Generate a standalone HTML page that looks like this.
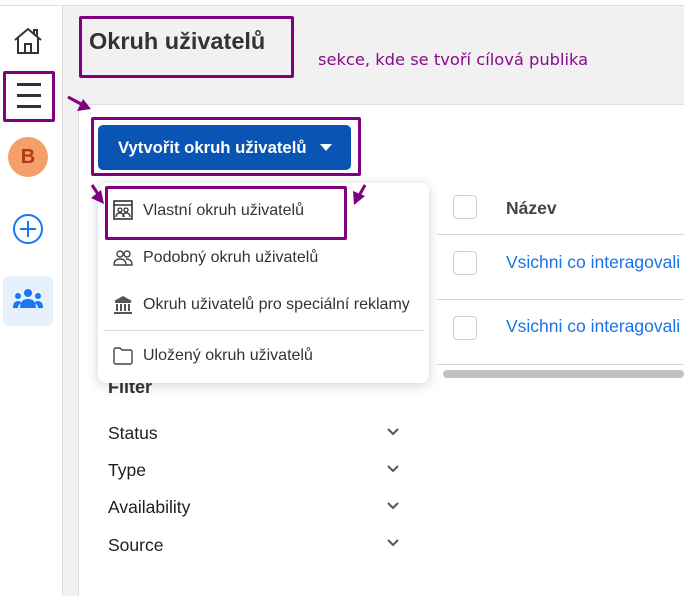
<!DOCTYPE html>
<html><head><meta charset="utf-8"><style>
*{margin:0;padding:0;box-sizing:border-box}
body{width:684px;height:596px;overflow:hidden;background:#fff;font-family:"Liberation Sans",Arial,sans-serif;position:relative;color:#1c1e21}
.a{position:absolute}
.pb{position:absolute;border:3px solid #800080;border-radius:2px}
.mi{position:absolute;left:143px;font-size:16px;color:#333}
.fi{position:absolute;left:108px;font-size:17.5px;color:#1c1e21}
.cb{position:absolute;left:453px;width:24px;height:24px;border:1px solid #ccd0d5;border-radius:4px;background:#fff}
.ln{position:absolute;left:437px;right:0;height:1px;background:#d6d6d6}
.ch{position:absolute;left:386px}
</style></head><body>
<div class="a" style="left:0;top:5px;width:684px;height:1px;background:#ddd"></div>
<div class="a" style="left:62px;top:6px;width:1px;height:590px;background:#ddd"></div>
<div class="a" style="left:63px;top:6px;width:621px;height:590px;background:#f1f1f1"></div>
<div class="a" style="left:78px;top:104px;width:606px;height:492px;background:#fff;border-left:1px solid #ddd;border-top:1px solid #ddd"></div>
<!-- sidebar icons -->
<svg class="a" style="left:13px;top:27px" width="30" height="28" viewBox="0 0 30 28"><path d="M2 13 L15 2 L28 13 M5 11 V26 H25 V11 M12 26 V17 H18 V26 M21 7 V3 H24 V9" fill="none" stroke="#333" stroke-width="2"/></svg>
<div class="pb" style="left:3px;top:71px;width:52px;height:51px"></div>
<div class="a" style="left:17px;top:83px;width:24px;height:2.5px;background:#333"></div>
<div class="a" style="left:17px;top:94px;width:24px;height:2.5px;background:#333"></div>
<div class="a" style="left:17px;top:105px;width:24px;height:2.5px;background:#333"></div>
<div class="a" style="left:8px;top:137px;width:40px;height:40px;border-radius:50%;background:#f79f6a;color:#b03a12;font-weight:bold;font-size:20px;text-align:center;line-height:40px">B</div>
<div class="a" style="left:13px;top:214px;width:30px;height:30px;border:2px solid #1877f2;border-radius:50%"></div>
<div class="a" style="left:20px;top:228px;width:16px;height:2px;background:#1877f2"></div>
<div class="a" style="left:27px;top:221px;width:2px;height:16px;background:#1877f2"></div>
<div class="a" style="left:3px;top:276px;width:50px;height:50px;border-radius:6px;background:#e7f0fd"></div>
<svg class="a" style="left:12px;top:288px" width="32" height="24" viewBox="0 0 32 24"><circle cx="16" cy="5" r="4" fill="#1877f2"/><circle cx="6" cy="8" r="3" fill="#1877f2"/><circle cx="26" cy="8" r="3" fill="#1877f2"/><path d="M8 20 Q8 11 16 11 Q24 11 24 20Z M1 20 Q1 13 6 13 Q9 13 9 15 Q6 17 6 20Z M31 20 Q31 13 26 13 Q23 13 23 15 Q26 17 26 20Z" fill="#1877f2"/></svg>
<!-- header -->
<div class="pb" style="left:79px;top:16px;width:215px;height:62px"></div>
<div class="a" style="left:89px;top:28px;font-size:23.5px;font-weight:bold;color:#333">Okruh uživatelů</div>
<div class="a" style="left:318px;top:50px;color:#8a0a8a;font-family:'DejaVu Sans',sans-serif;font-size:16.3px">sekce, kde se tvoří cílová publika</div>
<!-- button -->
<div class="pb" style="left:91px;top:117px;width:270px;height:59px"></div>
<div class="a" style="left:98px;top:125px;width:253px;height:45px;background:#0a54b4;border-radius:5px;color:#fff;font-weight:bold;font-size:16.7px;line-height:45px;padding-left:20px">Vytvořit okruh uživatelů</div>
<div class="a" style="left:320px;top:144px;border-left:6px solid transparent;border-right:6px solid transparent;border-top:7px solid #fff"></div>
<!-- table -->
<div class="cb" style="top:195px"></div><div class="a" style="left:506px;top:198px;font-size:17.5px;font-weight:bold;color:#444">Název</div>
<div class="ln" style="top:234px"></div>
<div class="cb" style="top:251px"></div><div class="a" style="left:506px;top:252px;font-size:17.5px;color:#1a73e8">Vsichni co interagovali</div>
<div class="ln" style="top:299px"></div>
<div class="cb" style="top:316px"></div><div class="a" style="left:506px;top:316px;font-size:17.5px;color:#1a73e8">Vsichni co interagovali</div>
<div class="ln" style="top:364px"></div>
<div class="a" style="left:443px;top:370px;width:241px;height:8px;border-radius:4px;background:#c1c1c1"></div>
<!-- filter -->
<div class="a" style="left:108px;top:377px;font-size:18px;font-weight:bold;color:#333">Filter</div>
<div class="fi" style="top:423px">Status</div>
<div class="fi" style="top:460px">Type</div>
<div class="fi" style="top:497px">Availability</div>
<div class="fi" style="top:535px">Source</div>
<svg class="ch" style="top:427px" width="14" height="10"><path d="M2 2 L7 7 L12 2" fill="none" stroke="#555" stroke-width="2"/></svg>
<svg class="ch" style="top:464px" width="14" height="10"><path d="M2 2 L7 7 L12 2" fill="none" stroke="#555" stroke-width="2"/></svg>
<svg class="ch" style="top:501px" width="14" height="10"><path d="M2 2 L7 7 L12 2" fill="none" stroke="#555" stroke-width="2"/></svg>
<svg class="ch" style="top:538px" width="14" height="10"><path d="M2 2 L7 7 L12 2" fill="none" stroke="#555" stroke-width="2"/></svg>
<!-- dropdown -->
<div class="a" style="left:98px;top:183px;width:331px;height:200px;background:#fff;border-radius:8px;box-shadow:0 2px 12px rgba(0,0,0,.18)"></div>
<div class="pb" style="left:105px;top:186px;width:242px;height:54px"></div>
<svg class="a" style="left:113px;top:200px" width="20" height="20" viewBox="0 0 20 20"><rect x="1" y="1" width="18" height="18" fill="none" stroke="#333" stroke-width="1.6"/><line x1="1" y1="5" x2="19" y2="5" stroke="#333" stroke-width="1.6"/><circle cx="7" cy="10" r="2" fill="none" stroke="#333" stroke-width="1.3"/><circle cx="13" cy="10" r="2" fill="none" stroke="#333" stroke-width="1.3"/><path d="M3 17 Q3 13 7 13 Q11 13 11 17 M10 17 Q10 13 13 13 Q17 13 17 17" fill="none" stroke="#333" stroke-width="1.3"/></svg>
<div class="mi" style="top:202px">Vlastní okruh uživatelů</div>
<svg class="a" style="left:113px;top:249px" width="20" height="18" viewBox="0 0 20 18"><circle cx="7" cy="5" r="3" fill="none" stroke="#444" stroke-width="1.4"/><circle cx="14" cy="5" r="3" fill="none" stroke="#444" stroke-width="1.4"/><path d="M1 16 Q1 10 7 10 Q13 10 13 16Z M13 10 Q19 10 19 16 H13" fill="none" stroke="#444" stroke-width="1.4"/></svg>
<div class="mi" style="top:249px">Podobný okruh uživatelů</div>
<svg class="a" style="left:113px;top:295px" width="20" height="20" viewBox="0 0 20 20"><path d="M1 6 L10 1 L19 6 Z" fill="#555"/><rect x="2" y="6" width="16" height="2" fill="#555"/><rect x="3" y="9" width="2" height="7" fill="#555"/><rect x="7" y="9" width="2" height="7" fill="#555"/><rect x="11" y="9" width="2" height="7" fill="#555"/><rect x="15" y="9" width="2" height="7" fill="#555"/><rect x="1" y="17" width="18" height="2" fill="#555"/></svg>
<div class="mi" style="top:296px">Okruh uživatelů pro speciální reklamy</div>
<div class="a" style="left:103px;top:330px;width:321px;height:1px;background:#d8dde3"></div>
<svg class="a" style="left:113px;top:347px" width="20" height="18" viewBox="0 0 20 18"><path d="M1 3 Q1 1 3 1 H7 L9 3 H17 Q19 3 19 5 V15 Q19 17 17 17 H3 Q1 17 1 15Z" fill="none" stroke="#444" stroke-width="1.4"/></svg>
<div class="mi" style="top:347px">Uložený okruh uživatelů</div>
<!-- arrows -->
<svg class="a" style="left:0;top:0" width="684" height="596"><g fill="#800080" stroke="#800080" stroke-width="3"><line x1="68" y1="97" x2="81" y2="104"/><path d="M91 109 L77 111 L83 99Z" stroke="none"/><line x1="92" y1="185" x2="98" y2="194"/><path d="M104 204 L91 198 L101 190Z" stroke="none"/><line x1="365" y1="185" x2="360" y2="194"/><path d="M354 205 L353 191 L365 196Z" stroke="none"/></g></svg>
</body></html>
